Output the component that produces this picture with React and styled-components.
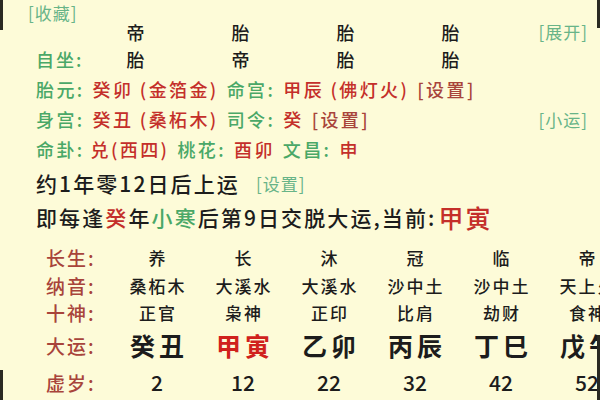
import React from "react";
import styled, { createGlobalStyle } from "styled-components";

const GlobalStyle = createGlobalStyle`
  html, body {
    margin: 0;
    padding: 0;
    background: #fdfbd8;
  }
  body {
    font-family: "Noto Sans CJK SC", "Noto Sans", sans-serif;
    font-weight: 500;
    color: #1c1c1c;
  }
`;

const GREEN = "#4aa867";
const LIGHT_GREEN = "#68b488";
const RED = "#c42f2a";
const BROWN_RED = "#a8443b";

const Page = styled.div`
  position: relative;
  width: 600px;
  height: 400px;
  overflow: hidden;
  background: #fdfbd8;
`;

const EdgeShade = styled.div`
  position: absolute;
  width: 3px;
  background: #2a2a22;
  ${(p) => (p.$side === "left" ? "left: 0;" : "right: 0;")}
  top: ${(p) => p.$top}px;
  height: ${(p) => p.$height}px;
`;

const Top = styled.div`
  padding: 5px 12px 0 36px;
`;

const Link = styled.span`
  color: ${(p) => p.$color || LIGHT_GREEN};
  font-size: ${(p) => p.$size || 17}px;
  font-weight: 400;
  letter-spacing: 1px;
  margin-left: ${(p) => p.$gap || 0}px;
`;

const FavLine = styled.div`
  height: 16px;
  line-height: 16px;
  margin-left: -8px;
`;

const PillarRow = styled.div`
  display: grid;
  grid-template-columns: 48px repeat(4, 105px) 1fr;
  align-items: center;
  height: ${(p) => p.$height}px;
  line-height: 20px;
  font-size: 18px;
  letter-spacing: 2px;
`;

const Label = styled.span`
  color: ${GREEN};
  white-space: nowrap;
`;

const Cell = styled.span`
  text-align: center;
  color: #1c1c1c;
`;

const RightLink = styled.span`
  justify-self: end;
  color: ${LIGHT_GREEN};
  font-size: 17px;
  font-weight: 400;
  letter-spacing: 1px;
`;

const InfoRow = styled.div`
  display: flex;
  align-items: center;
  height: 30px;
  font-size: 18px;
  letter-spacing: 2.4px;
  white-space: nowrap;
`;

const Part = styled.span`
  color: ${(p) => p.$color || "#1c1c1c"};
  margin-right: ${(p) => p.$gap ?? 8}px;
`;

const Spacer = styled.span`
  flex: 1;
`;

const StoryRow = styled.div`
  display: flex;
  align-items: center;
  height: ${(p) => p.$height}px;
  font-size: 21px;
  letter-spacing: 2.1px;
  white-space: nowrap;
`;

const Hl = styled.span`
  color: ${(p) => p.$color};
  font-size: ${(p) => p.$size || 21}px;
  margin-left: ${(p) => p.$gap || 0}px;
`;

const Luck = styled.div`
  margin-top: 11px;
  padding-left: 46px;
`;

const LuckRow = styled.div`
  display: grid;
  grid-template-columns: 68px repeat(6, 86px);
  align-items: center;
  height: ${(p) => p.$height}px;
  white-space: nowrap;
`;

const LuckLabel = styled.span`
  color: ${BROWN_RED};
  font-size: 19px;
  letter-spacing: 2px;
`;

const LuckCell = styled.span`
  text-align: center;
  font-size: ${(p) => p.$size}px;
  font-weight: ${(p) => (p.$bold ? 700 : 500)};
  letter-spacing: ${(p) => p.$ls}px;
  color: ${(p) => (p.$red ? "#d0211c" : "#1c1c1c")};
  margin-right: -${(p) => p.$ls}px;
`;

const pillarTop = ["帝", "胎", "胎", "胎"];
const pillarSelf = ["胎", "帝", "胎", "胎"];

const luck = {
  stage: ["养", "长", "沐", "冠", "临", "帝"],
  nayin: ["桑柘木", "大溪水", "大溪水", "沙中土", "沙中土", "天上火"],
  god: ["正官", "枭神", "正印", "比肩", "劫财", "食神"],
  pillar: ["癸丑", "甲寅", "乙卯", "丙辰", "丁巳", "戊午"],
  age: ["2", "12", "22", "32", "42", "52"],
};

const luckRows = [
  { key: "stage", label: "长生:", height: 28, size: 17, ls: 2 },
  { key: "nayin", label: "纳音:", height: 28, size: 17, ls: 2 },
  { key: "god", label: "十神:", height: 27, size: 17, ls: 2 },
  { key: "pillar", label: "大运:", height: 38, size: 25, ls: 4, bold: true },
  { key: "age", label: "虚岁:", height: 36, size: 21, ls: 0 },
];

export default function App() {
  return (
    <>
      <GlobalStyle />
      <Page>
        <EdgeShade $side="left" $top={0} $height={30} />
        <EdgeShade $side="left" $top={370} $height={30} />
        <EdgeShade $side="right" $top={0} $height={28} />
        <EdgeShade $side="right" $top={335} $height={65} />

        <Top>
          <FavLine>
            <Link>[收藏]</Link>
          </FavLine>
          <PillarRow $height={22}>
            <span />
            {pillarTop.map((v, i) => (
              <Cell key={i}>{v}</Cell>
            ))}
            <RightLink>[展开]</RightLink>
          </PillarRow>
          <PillarRow $height={31}>
            <Label>自坐:</Label>
            {pillarSelf.map((v, i) => (
              <Cell key={i}>{v}</Cell>
            ))}
            <span />
          </PillarRow>

          <InfoRow>
            <Part $color={GREEN}>胎元:</Part>
            <Part $color={RED}>癸卯 (金箔金)</Part>
            <Part $color={GREEN}>命宫:</Part>
            <Part $color={RED}>甲辰 (佛灯火)</Part>
            <Part $color={BROWN_RED}>[设置]</Part>
          </InfoRow>
          <InfoRow>
            <Part $color={GREEN}>身宫:</Part>
            <Part $color={RED}>癸丑 (桑柘木)</Part>
            <Part $color={GREEN}>司令:</Part>
            <Part $color={RED}>癸</Part>
            <Part $color={BROWN_RED}>[设置]</Part>
            <Spacer />
            <Link>[小运]</Link>
          </InfoRow>
          <InfoRow>
            <Part $color={GREEN} $gap={6}>命卦:</Part>
            <Part $color={RED}>兑(西四)</Part>
            <Part $color={GREEN}>桃花:</Part>
            <Part $color={RED}>酉卯</Part>
            <Part $color={GREEN}>文昌:</Part>
            <Part $color={RED}>申</Part>
          </InfoRow>

          <StoryRow $height={38}>
            约1年零12日后上运
            <Link $gap={16}>[设置]</Link>
          </StoryRow>
          <StoryRow $height={30}>
            即每逢<Hl $color={RED}>癸</Hl>年<Hl $color={GREEN}>小寒</Hl>
            后第9日交脱大运,当前:
            <Hl $color={RED} $size={25} $gap={2}>
              甲寅
            </Hl>
          </StoryRow>
        </Top>

        <Luck>
          {luckRows.map((row) => (
            <LuckRow key={row.key} $height={row.height}>
              <LuckLabel>{row.label}</LuckLabel>
              {luck[row.key].map((v, i) => (
                <LuckCell
                  key={i}
                  $size={row.size}
                  $ls={row.ls}
                  $bold={row.bold}
                  $red={row.key === "pillar" && i === 1}
                >
                  {v}
                </LuckCell>
              ))}
            </LuckRow>
          ))}
        </Luck>
      </Page>
    </>
  );
}
